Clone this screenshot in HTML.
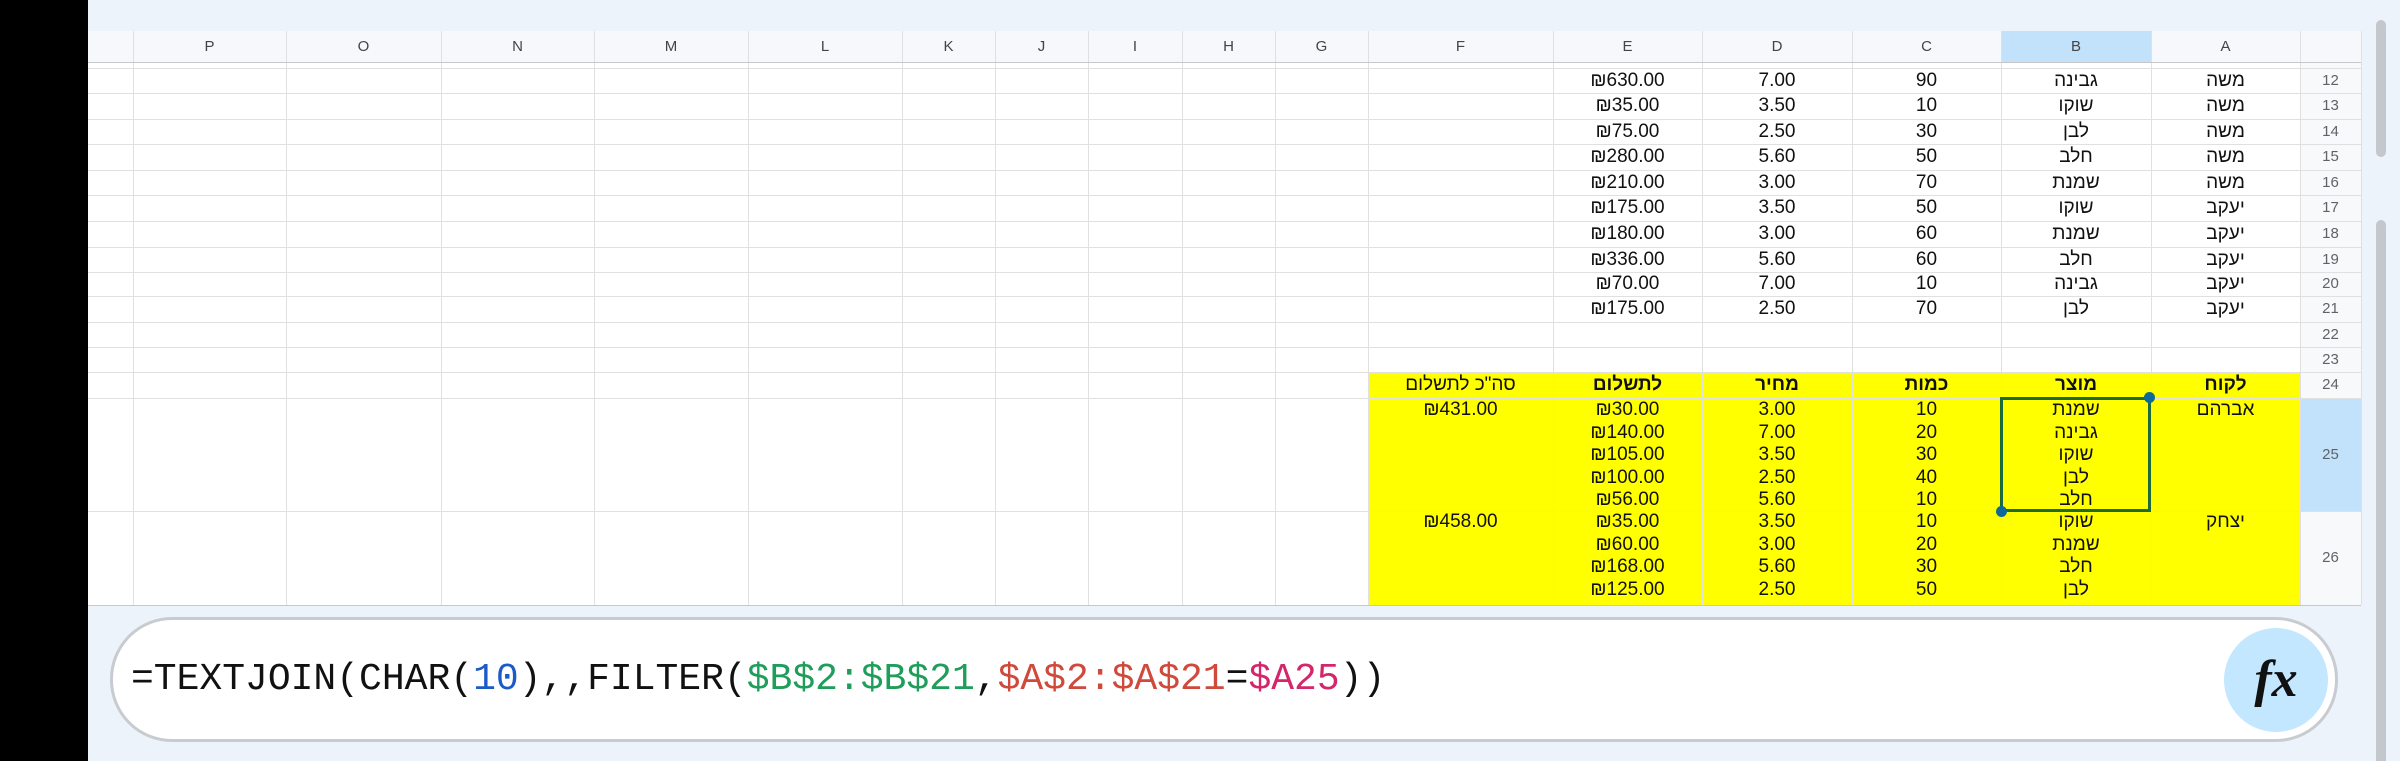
<!DOCTYPE html>
<html><head><meta charset="utf-8"><style>
*{margin:0;padding:0;box-sizing:border-box}
html,body{width:2400px;height:761px;overflow:hidden}
body{background:#edf3fb;position:relative;font-family:"Liberation Sans","DejaVu Sans",sans-serif}
.a{position:absolute}
.v{position:absolute;top:31px;height:574px;width:1px;background:#e0e0e0}
.h{position:absolute;left:88px;width:2273px;height:1px;background:#e0e0e0}
.c{position:absolute;text-align:center;font-size:19px;color:#111;white-space:nowrap}
.hd{position:absolute;top:31px;height:32px;line-height:32px;text-align:center;font-size:15px;color:#444}
.A{left:2151px;width:149px}.B{left:2001px;width:150px}.C{left:1852px;width:149px}.D{left:1702px;width:150px}.E{left:1553px;width:149px}.F{left:1368px;width:185px}
.R{left:2300px;width:61px;font-size:15px;color:#5f6368}
.ml{line-height:22.5px}
</style></head><body>
<div class="a" style="left:0;top:0;width:88px;height:761px;background:#000"></div>
<div class="a" style="left:88px;top:31px;width:2273px;height:32px;background:#f6f8fc"></div>
<div class="a" style="left:2001px;top:31px;width:150px;height:32px;background:#c2e2fb"></div>
<div class="a" style="left:88px;top:63px;width:2273px;height:542px;background:#fff"></div>
<div class="a" style="left:2300px;top:63px;width:61px;height:542px;background:#f8f9fa"></div>
<div class="a" style="left:1368px;top:372px;width:932px;height:233px;background:#ffff00"></div>
<div class="a" style="left:2300px;top:398px;width:61px;height:113px;background:#c2e2fb"></div>

<div class="v" style="left:133px"></div><div class="v" style="left:286px"></div><div class="v" style="left:441px"></div><div class="v" style="left:594px"></div><div class="v" style="left:748px"></div><div class="v" style="left:902px"></div><div class="v" style="left:995px"></div><div class="v" style="left:1088px"></div><div class="v" style="left:1182px"></div><div class="v" style="left:1275px"></div><div class="v" style="left:1368px"></div><div class="v" style="left:1553px"></div><div class="v" style="left:1702px"></div><div class="v" style="left:1852px"></div><div class="v" style="left:2001px"></div><div class="v" style="left:2151px"></div><div class="v" style="left:2300px"></div><div class="v" style="left:2361px"></div>

<div class="h" style="top:62px;background:#c8c8c8"></div><div class="h" style="top:68px"></div><div class="h" style="top:93px"></div><div class="h" style="top:119px"></div><div class="h" style="top:144px"></div><div class="h" style="top:170px"></div><div class="h" style="top:195px"></div><div class="h" style="top:221px"></div><div class="h" style="top:247px"></div><div class="h" style="top:272px"></div><div class="h" style="top:296px"></div><div class="h" style="top:322px"></div><div class="h" style="top:347px"></div><div class="h" style="top:372px"></div><div class="h" style="top:398px"></div><div class="h" style="top:511px"></div><div class="h" style="top:605px;background:#c8c8c8"></div>

<div class="hd" style="left:133px;width:153px">P</div><div class="hd" style="left:286px;width:155px">O</div><div class="hd" style="left:441px;width:153px">N</div><div class="hd" style="left:594px;width:154px">M</div><div class="hd" style="left:748px;width:154px">L</div><div class="hd" style="left:902px;width:93px">K</div><div class="hd" style="left:995px;width:93px">J</div><div class="hd" style="left:1088px;width:94px">I</div><div class="hd" style="left:1182px;width:93px">H</div><div class="hd" style="left:1275px;width:93px">G</div><div class="hd F">F</div><div class="hd E">E</div><div class="hd D">D</div><div class="hd C">C</div><div class="hd B">B</div><div class="hd A">A</div>

<div class="c A" dir="rtl" style="top:68px;line-height:25px">משה</div><div class="c B" dir="rtl" style="top:68px;line-height:25px">גבינה</div><div class="c C" style="top:68px;line-height:25px">90</div><div class="c D" style="top:68px;line-height:25px">7.00</div><div class="c E" style="top:68px;line-height:25px">₪630.00</div><div class="c R" style="top:68px;line-height:25px">12</div>
<div class="c A" dir="rtl" style="top:93px;line-height:26px">משה</div><div class="c B" dir="rtl" style="top:93px;line-height:26px">שוקו</div><div class="c C" style="top:93px;line-height:26px">10</div><div class="c D" style="top:93px;line-height:26px">3.50</div><div class="c E" style="top:93px;line-height:26px">₪35.00</div><div class="c R" style="top:93px;line-height:26px">13</div>
<div class="c A" dir="rtl" style="top:119px;line-height:25px">משה</div><div class="c B" dir="rtl" style="top:119px;line-height:25px">לבן</div><div class="c C" style="top:119px;line-height:25px">30</div><div class="c D" style="top:119px;line-height:25px">2.50</div><div class="c E" style="top:119px;line-height:25px">₪75.00</div><div class="c R" style="top:119px;line-height:25px">14</div>
<div class="c A" dir="rtl" style="top:144px;line-height:26px">משה</div><div class="c B" dir="rtl" style="top:144px;line-height:26px">חלב</div><div class="c C" style="top:144px;line-height:26px">50</div><div class="c D" style="top:144px;line-height:26px">5.60</div><div class="c E" style="top:144px;line-height:26px">₪280.00</div><div class="c R" style="top:144px;line-height:26px">15</div>
<div class="c A" dir="rtl" style="top:170px;line-height:25px">משה</div><div class="c B" dir="rtl" style="top:170px;line-height:25px">שמנת</div><div class="c C" style="top:170px;line-height:25px">70</div><div class="c D" style="top:170px;line-height:25px">3.00</div><div class="c E" style="top:170px;line-height:25px">₪210.00</div><div class="c R" style="top:170px;line-height:25px">16</div>
<div class="c A" dir="rtl" style="top:195px;line-height:26px">יעקב</div><div class="c B" dir="rtl" style="top:195px;line-height:26px">שוקו</div><div class="c C" style="top:195px;line-height:26px">50</div><div class="c D" style="top:195px;line-height:26px">3.50</div><div class="c E" style="top:195px;line-height:26px">₪175.00</div><div class="c R" style="top:195px;line-height:26px">17</div>
<div class="c A" dir="rtl" style="top:221px;line-height:26px">יעקב</div><div class="c B" dir="rtl" style="top:221px;line-height:26px">שמנת</div><div class="c C" style="top:221px;line-height:26px">60</div><div class="c D" style="top:221px;line-height:26px">3.00</div><div class="c E" style="top:221px;line-height:26px">₪180.00</div><div class="c R" style="top:221px;line-height:26px">18</div>
<div class="c A" dir="rtl" style="top:247px;line-height:25px">יעקב</div><div class="c B" dir="rtl" style="top:247px;line-height:25px">חלב</div><div class="c C" style="top:247px;line-height:25px">60</div><div class="c D" style="top:247px;line-height:25px">5.60</div><div class="c E" style="top:247px;line-height:25px">₪336.00</div><div class="c R" style="top:247px;line-height:25px">19</div>
<div class="c A" dir="rtl" style="top:272px;line-height:24px">יעקב</div><div class="c B" dir="rtl" style="top:272px;line-height:24px">גבינה</div><div class="c C" style="top:272px;line-height:24px">10</div><div class="c D" style="top:272px;line-height:24px">7.00</div><div class="c E" style="top:272px;line-height:24px">₪70.00</div><div class="c R" style="top:272px;line-height:24px">20</div>
<div class="c A" dir="rtl" style="top:296px;line-height:26px">יעקב</div><div class="c B" dir="rtl" style="top:296px;line-height:26px">לבן</div><div class="c C" style="top:296px;line-height:26px">70</div><div class="c D" style="top:296px;line-height:26px">2.50</div><div class="c E" style="top:296px;line-height:26px">₪175.00</div><div class="c R" style="top:296px;line-height:26px">21</div>
<div class="c R" style="top:322px;line-height:25px">22</div>
<div class="c R" style="top:347px;line-height:25px">23</div>
<div class="c A" dir="rtl" style="top:372px;line-height:26px;font-weight:bold">לקוח</div><div class="c B" dir="rtl" style="top:372px;line-height:26px;font-weight:bold">מוצר</div><div class="c C" dir="rtl" style="top:372px;line-height:26px;font-weight:bold">כמות</div><div class="c D" dir="rtl" style="top:372px;line-height:26px;font-weight:bold">מחיר</div><div class="c E" dir="rtl" style="top:372px;line-height:26px;font-weight:bold">לתשלום</div><div class="c F" dir="rtl" style="top:372px;line-height:26px">סה"כ לתשלום</div><div class="c R" style="top:372px;line-height:26px">24</div>

<div class="c A ml" dir="rtl" style="top:399px">אברהם</div>
<div class="c B ml" dir="rtl" style="top:399px">שמנת<br>גבינה<br>שוקו<br>לבן<br>חלב</div>
<div class="c C ml" style="top:399px">10<br>20<br>30<br>40<br>10</div>
<div class="c D ml" style="top:399px">3.00<br>7.00<br>3.50<br>2.50<br>5.60</div>
<div class="c E ml" style="top:399px">₪30.00<br>₪140.00<br>₪105.00<br>₪100.00<br>₪56.00</div>
<div class="c F ml" style="top:399px">₪431.00</div>
<div class="c R" style="top:398px;line-height:113px">25</div>

<div class="c A ml" dir="rtl" style="top:511px">יצחק</div>
<div class="c B ml" dir="rtl" style="top:511px">שוקו<br>שמנת<br>חלב<br>לבן</div>
<div class="c C ml" style="top:511px">10<br>20<br>30<br>50</div>
<div class="c D ml" style="top:511px">3.50<br>3.00<br>5.60<br>2.50</div>
<div class="c E ml" style="top:511px">₪35.00<br>₪60.00<br>₪168.00<br>₪125.00</div>
<div class="c F ml" style="top:511px">₪458.00</div>
<div class="c R" style="top:511px;line-height:94px">26</div>

<div class="a" style="left:2000px;top:397px;width:151px;height:115px;border:3px solid #1d6b3b"></div>
<div class="a" style="left:2144px;top:392px;width:11px;height:11px;border-radius:50%;background:#0b6a9a"></div>
<div class="a" style="left:1996px;top:506px;width:11px;height:11px;border-radius:50%;background:#0b6a9a"></div>

<div class="a" style="left:2376px;top:20px;width:10px;height:137px;border-radius:5px;background:#c4c7cc"></div>
<div class="a" style="left:2376px;top:220px;width:10px;height:541px;border-radius:5px 5px 0 0;background:#c4c7cc"></div>

<div class="a" style="left:110px;top:617px;width:2228px;height:125px;border:3px solid #c8cbd0;border-radius:62px;background:#fff"></div>
<div class="a" style="left:131px;top:652px;font:38px/56px 'Liberation Mono',monospace;color:#111;white-space:pre">=TEXTJOIN(CHAR(<span style="color:#1a5bc8">10</span>),,FILTER(<span style="color:#1e9e5a">$B$2:$B$21</span>,<span style="color:#cf4a3a">$A$2:$A$21</span>=<span style="color:#d4266c">$A25</span>))</div>
<div class="a" style="left:2224px;top:628px;width:104px;height:104px;border-radius:50%;background:#c2e7ff;text-align:center;font:italic bold 52px/104px 'Liberation Serif',serif;color:#111">fx</div>
</body></html>
